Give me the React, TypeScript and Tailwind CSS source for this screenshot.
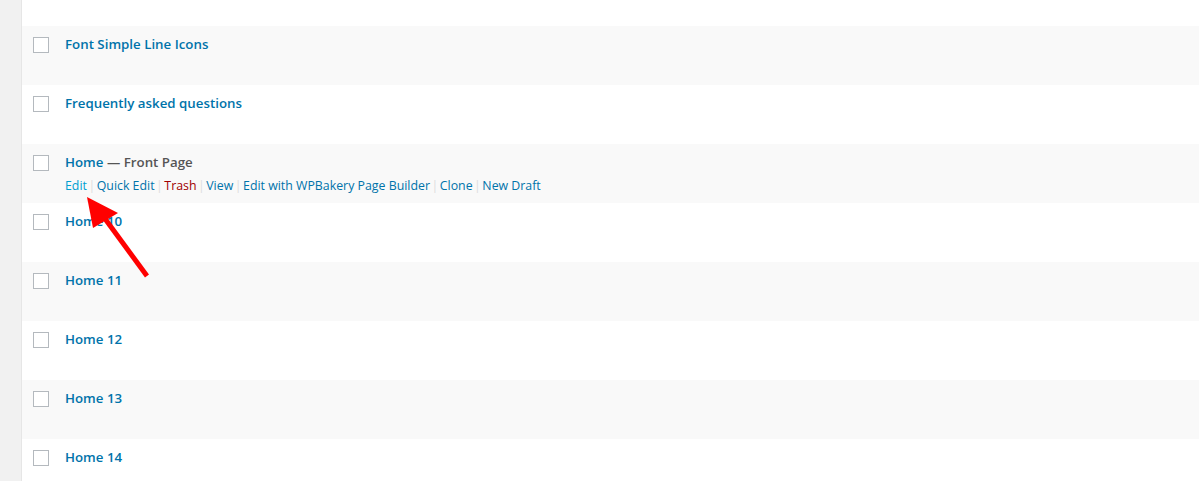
import React from "react";

const rows: { title: string; state?: string; actions?: boolean }[] = [
  { title: "Font Simple Line Icons" },
  { title: "Frequently asked questions" },
  { title: "Home", state: "Front Page", actions: true },
  { title: "Home 10" },
  { title: "Home 11" },
  { title: "Home 12" },
  { title: "Home 13" },
  { title: "Home 14" },
];

function Sep() {
  return <span className="text-[#dddddd] mx-[1.5px]">|</span>;
}

export default function App() {
  return (
    <div
      className="relative flex w-[1199px] h-[481px] overflow-hidden bg-[#f1f1f1]"
      style={{ fontFamily: '"Open Sans", "Noto Sans", sans-serif' }}
    >
      <div className="w-[21px] shrink-0 bg-[#f1f1f1]" />
      <div className="w-[1px] shrink-0 bg-[#e6e6e6]" />
      <div className="flex-1 bg-white flex flex-col">
        <div className="h-[26px] shrink-0 bg-white" />
        {rows.map((r, i) => (
          <div
            key={i}
            className={`h-[59px] shrink-0 flex ${i % 2 === 0 ? "bg-[#f9f9f9]" : "bg-white"}`}
          >
            <div className="w-[43px] shrink-0 pt-[11px] pl-[11px]">
              <div className="w-[16px] h-[16px] border border-[#b4b9be] bg-white" />
            </div>
            <div className="pt-[8px]">
              <div className="text-[13.3px] leading-[20px] font-semibold">
                <span className="text-[#0073aa]">{r.title}</span>
                {r.state && <span className="text-[#555555]"> — {r.state}</span>}
              </div>
              {r.actions && (
                <div className="text-[12.35px] leading-[20px] mt-[4px] text-[#0073aa]">
                  <span className="text-[#00a0d2]">Edit</span>
                  <Sep />
                  <span>Quick Edit</span>
                  <Sep />
                  <span className="text-[#a00000]">Trash</span>
                  <Sep />
                  <span>View</span>
                  <Sep />
                  <span>Edit with WPBakery Page Builder</span>
                  <Sep />
                  <span>Clone</span>
                  <Sep />
                  <span>New Draft</span>
                </div>
              )}
            </div>
          </div>
        ))}
      </div>
      <svg
        className="absolute left-0 top-0 pointer-events-none"
        width="1199"
        height="481"
        viewBox="0 0 1199 481"
      >
        <line x1="147" y1="276" x2="103" y2="216" stroke="#ff0000" strokeWidth="5" />
        <polygon points="87,197 118,213 93,228" fill="#ff0000" />
      </svg>
    </div>
  );
}
